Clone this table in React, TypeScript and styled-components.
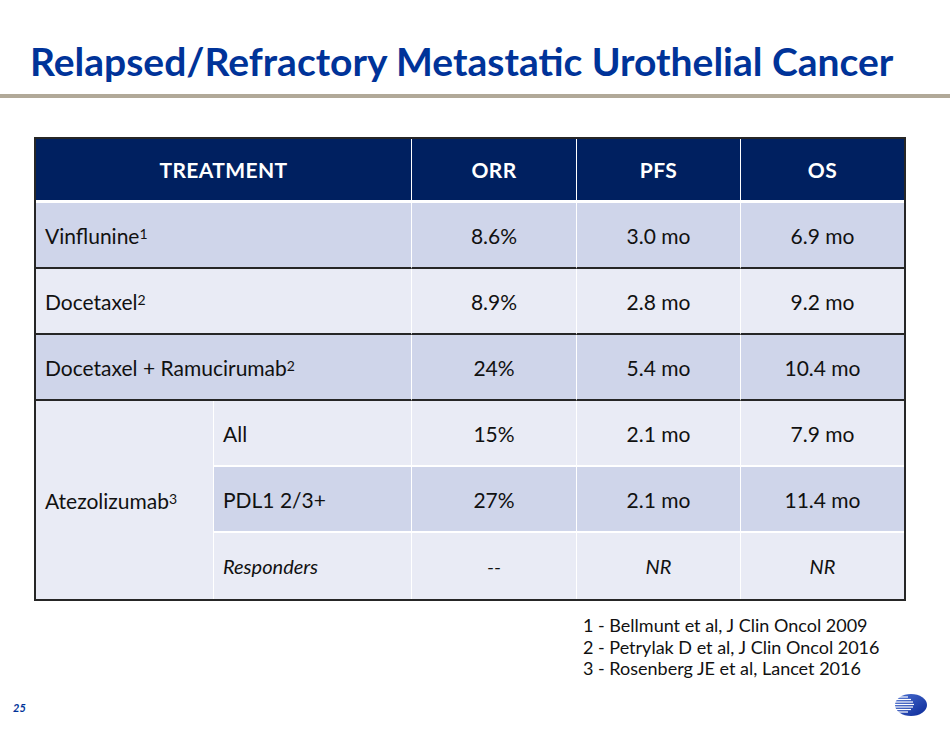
import styled, { createGlobalStyle } from 'styled-components'

const GlobalStyle = createGlobalStyle`
  html, body {
    margin: 0;
    padding: 0;
    background: #fff;
  }
  body {
    font-family: Lato, "Open Sans", sans-serif;
  }
`

const Slide = styled.div`
  width: 950px;
  height: 729px;
  display: flex;
  flex-direction: column;
  background: #fff;
  overflow: hidden;
`

const Title = styled.h1`
  margin: 0;
  padding: 38px 0 0 30px;
  height: 56px;
  font-size: 39px;
  line-height: 46px;
  font-weight: 700;
  color: #003399;
  letter-spacing: 0;
  white-space: nowrap;
`

const Rule = styled.div`
  height: 4px;
  background: #b1a998;
`

const TableWrap = styled.div`
  margin: 39px 0 0 34px;
  width: 872px;
`

const Grid = styled.table`
  width: 872px;
  border-collapse: separate;
  border-spacing: 0;
  table-layout: fixed;
  border: 2px solid #262626;
`

const HeadCell = styled.th<{ $last?: boolean }>`
  height: 61px;
  padding: 0;
  background: #002060;
  color: #fff;
  font-size: 21px;
  font-weight: 700;
  letter-spacing: 0.4px;
  text-align: center;
  border-right: ${(p) => (p.$last ? 'none' : '1px solid #fff')};
  border-bottom: 3px solid #fff;
`

const Cell = styled.td<{
  $shade: 'dark' | 'light'
  $align?: 'left' | 'center'
  $edge?: 'dark' | 'light' | 'none'
  $last?: boolean
  $italic?: boolean
}>`
  height: ${(p) => (p.$edge === 'none' ? '66px' : '64px')};
  padding: 0 0 0 ${(p) => (p.$align === 'left' ? '9px' : '0')};
  background: ${(p) => (p.$shade === 'dark' ? '#cfd5ea' : '#e9ebf5')};
  color: #111;
  font-size: ${(p) => (p.$italic ? '20px' : '21px')};
  font-style: ${(p) => (p.$italic ? 'italic' : 'normal')};
  text-align: ${(p) => p.$align ?? 'center'};
  vertical-align: middle;
  white-space: nowrap;
  border-right: ${(p) => (p.$last ? 'none' : '1px solid #fff')};
  border-bottom: ${(p) =>
    p.$edge === 'dark'
      ? '2px solid #262626'
      : p.$edge === 'light'
        ? '2px solid #fff'
        : 'none'};
`

const Sup = styled.sup`
  font-size: 14px;
  line-height: 0;
  vertical-align: 5px;
`

const Notes = styled.div`
  margin: 14px 0 0 583px;
  font-size: 18px;
  line-height: 21.5px;
  color: #111;
`

const Footer = styled.div`
  margin-top: auto;
  height: 36px;
  display: flex;
  align-items: center;
  justify-content: space-between;
  padding: 0 22px 6px 13px;
`

const PageNo = styled.span`
  font-size: 11px;
  font-weight: 700;
  font-style: italic;
  color: #003399;
  padding-top: 4px;
`

function Logo() {
  const stripes = [4, 6.5, 9, 11.5, 14, 16.5, 19]
  const lens = [14, 17, 19, 20, 19, 17, 14]
  return (
    <svg width="34" height="24" viewBox="0 0 34 24">
      <defs>
        <linearGradient id="lg" x1="0" y1="0" x2="1" y2="1">
          <stop offset="0" stopColor="#4a6fd0" />
          <stop offset="1" stopColor="#0b2a99" />
        </linearGradient>
      </defs>
      <ellipse cx="17" cy="12" rx="16" ry="11" fill="url(#lg)" />
      {stripes.map((y, i) => (
        <rect key={y} x="0" y={y - 0.6} width={lens[i]} height="1.2" fill="#fff" />
      ))}
    </svg>
  )
}

type Row = {
  name: string
  sup: string
  orr: string
  pfs: string
  os: string
  shade: 'dark' | 'light'
}

const rows: Row[] = [
  { name: 'Vinflunine', sup: '1', orr: '8.6%', pfs: '3.0 mo', os: '6.9 mo', shade: 'dark' },
  { name: 'Docetaxel', sup: '2', orr: '8.9%', pfs: '2.8 mo', os: '9.2 mo', shade: 'light' },
  { name: 'Docetaxel + Ramucirumab', sup: '2', orr: '24%', pfs: '5.4 mo', os: '10.4 mo', shade: 'dark' },
]

const subRows = [
  { label: 'All', orr: '15%', pfs: '2.1 mo', os: '7.9 mo', shade: 'light' as const, italic: false },
  { label: 'PDL1 2/3+', orr: '27%', pfs: '2.1 mo', os: '11.4 mo', shade: 'dark' as const, italic: false },
  { label: 'Responders', orr: '--', pfs: 'NR', os: 'NR', shade: 'light' as const, italic: true },
]

export default function App() {
  return (
    <Slide>
      <GlobalStyle />
      <Title>Relapsed/Refractory Metastatic Urothelial Cancer</Title>
      <Rule />
      <TableWrap>
        <Grid>
          <colgroup>
            <col style={{ width: 178 }} />
            <col style={{ width: 198 }} />
            <col style={{ width: 165 }} />
            <col style={{ width: 164 }} />
            <col style={{ width: 163 }} />
          </colgroup>
          <thead>
            <tr>
              <HeadCell colSpan={2}>TREATMENT</HeadCell>
              <HeadCell>ORR</HeadCell>
              <HeadCell>PFS</HeadCell>
              <HeadCell $last>OS</HeadCell>
            </tr>
          </thead>
          <tbody>
            {rows.map((r) => (
              <tr key={r.name}>
                <Cell colSpan={2} $shade={r.shade} $align="left" $edge="dark">
                  {r.name}
                  <Sup>{r.sup}</Sup>
                </Cell>
                <Cell $shade={r.shade} $edge="dark">{r.orr}</Cell>
                <Cell $shade={r.shade} $edge="dark">{r.pfs}</Cell>
                <Cell $shade={r.shade} $edge="dark" $last>{r.os}</Cell>
              </tr>
            ))}
            {subRows.map((s, i) => {
              const edge = i === subRows.length - 1 ? 'none' : 'light'
              return (
                <tr key={s.label}>
                  {i === 0 && (
                    <Cell rowSpan={3} $shade="light" $align="left" $edge="none">
                      Atezolizumab<Sup>3</Sup>
                    </Cell>
                  )}
                  <Cell $shade={s.shade} $align="left" $edge={edge} $italic={s.italic}>
                    {s.label}
                  </Cell>
                  <Cell $shade={s.shade} $edge={edge} $italic={s.italic}>{s.orr}</Cell>
                  <Cell $shade={s.shade} $edge={edge} $italic={s.italic}>{s.pfs}</Cell>
                  <Cell $shade={s.shade} $edge={edge} $italic={s.italic} $last>{s.os}</Cell>
                </tr>
              )
            })}
          </tbody>
        </Grid>
      </TableWrap>
      <Notes>
        <div>1 - Bellmunt et al, J Clin Oncol 2009</div>
        <div>2 - Petrylak D et al, J Clin Oncol 2016</div>
        <div>3 - Rosenberg JE et al, Lancet 2016</div>
      </Notes>
      <Footer>
        <PageNo>25</PageNo>
        <Logo />
      </Footer>
    </Slide>
  )
}
